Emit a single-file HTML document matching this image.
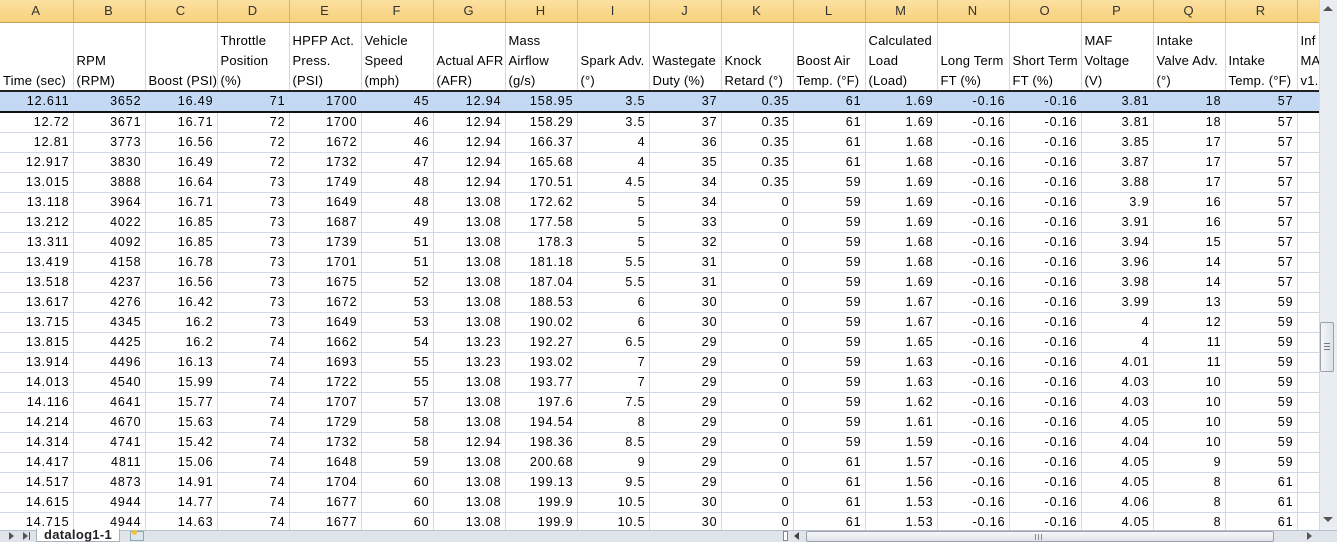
<!DOCTYPE html>
<html><head><meta charset="utf-8"><style>
*{margin:0;padding:0;box-sizing:border-box}
body{width:1337px;height:542px;overflow:hidden;background:#fff;font-family:"Liberation Sans",sans-serif;font-size:12px;color:#000;position:relative}
#grid{position:absolute;left:0;top:0;width:1319px;height:530px;overflow:hidden}
table{border-collapse:collapse;table-layout:fixed;width:1319px}
td{border-right:1px solid #d0d7e5;border-bottom:1px solid #d0d7e5;height:20px;padding:0 3px 0 2px;text-align:right;white-space:nowrap;overflow:hidden;line-height:19px;letter-spacing:0.9px;font-size:12.5px}
tr.L td{background:linear-gradient(#fbe0a0,#f7d27c);border-right:1px solid #d7b365;border-bottom:1px solid #c4a055;height:22px;text-align:center;color:#333;font-size:13px;line-height:21px;letter-spacing:0}
tr.H td{height:69px;text-align:left;vertical-align:bottom;line-height:20px;padding:0 0 0 3px;letter-spacing:0.2px;font-size:13px;border-bottom:2px solid #222}
tr.H td span{position:relative;top:1px;display:block}
tr.S td{background:#c3d9f3;border-bottom:2px solid #111}
#vs{position:absolute;left:1319px;top:0;width:18px;height:530px;background:#e9ecf0;border-left:1px solid #d5d9de}
#thumb{position:absolute;left:1320px;top:322px;width:14px;height:50px;background:linear-gradient(90deg,#f4f6f8,#dde2e8);border:1px solid #9aa3ad;border-radius:2px}
#bot{position:absolute;left:0;top:530px;width:1337px;height:12px;background:#dfe4ea;border-top:1px solid #b9c2cc}
#tab{position:absolute;left:36px;top:529px;width:84px;height:13px;background:#fff;border:1px solid #a8b2bd;border-top:none;font-size:13px;line-height:12px;text-align:center;color:#222;font-weight:bold;letter-spacing:0.3px}
#hs{position:absolute;left:806px;top:531px;width:468px;height:11px;background:linear-gradient(#f5f7f9,#dfe4ea);border:1px solid #9aa3ad;border-radius:2px}
</style></head><body>
<div id="grid"><table>
<colgroup><col style="width:73px"><col style="width:72px"><col style="width:72px"><col style="width:72px"><col style="width:72px"><col style="width:72px"><col style="width:72px"><col style="width:72px"><col style="width:72px"><col style="width:72px"><col style="width:72px"><col style="width:72px"><col style="width:72px"><col style="width:72px"><col style="width:72px"><col style="width:72px"><col style="width:72px"><col style="width:72px"><col style="width:22px"></colgroup>
<tr class="L"><td>A</td><td>B</td><td>C</td><td>D</td><td>E</td><td>F</td><td>G</td><td>H</td><td>I</td><td>J</td><td>K</td><td>L</td><td>M</td><td>N</td><td>O</td><td>P</td><td>Q</td><td>R</td><td></td></tr>
<tr class="H"><td><span>Time (sec)</span></td><td><span>RPM<br>(RPM)</span></td><td><span>Boost (PSI)</span></td><td><span>Throttle<br>Position<br>(%)</span></td><td><span>HPFP Act.<br>Press.<br>(PSI)</span></td><td><span>Vehicle<br>Speed<br>(mph)</span></td><td><span>Actual AFR<br>(AFR)</span></td><td><span>Mass<br>Airflow<br>(g/s)</span></td><td><span>Spark Adv.<br>(°)</span></td><td><span>Wastegate<br>Duty (%)</span></td><td><span>Knock<br>Retard (°)</span></td><td><span>Boost Air<br>Temp. (°F)</span></td><td><span>Calculated<br>Load<br>(Load)</span></td><td><span>Long Term<br>FT (%)</span></td><td><span>Short Term<br>FT (%)</span></td><td><span>MAF<br>Voltage<br>(V)</span></td><td><span>Intake<br>Valve Adv.<br>(°)</span></td><td><span>Intake<br>Temp. (°F)</span></td><td><span>Inf<br>MA<br>v1.</span></td></tr>
<tr class="S"><td>12.611</td><td>3652</td><td>16.49</td><td>71</td><td>1700</td><td>45</td><td>12.94</td><td>158.95</td><td>3.5</td><td>37</td><td>0.35</td><td>61</td><td>1.69</td><td>-0.16</td><td>-0.16</td><td>3.81</td><td>18</td><td>57</td><td></td></tr>
<tr><td>12.72</td><td>3671</td><td>16.71</td><td>72</td><td>1700</td><td>46</td><td>12.94</td><td>158.29</td><td>3.5</td><td>37</td><td>0.35</td><td>61</td><td>1.69</td><td>-0.16</td><td>-0.16</td><td>3.81</td><td>18</td><td>57</td><td></td></tr>
<tr><td>12.81</td><td>3773</td><td>16.56</td><td>72</td><td>1672</td><td>46</td><td>12.94</td><td>166.37</td><td>4</td><td>36</td><td>0.35</td><td>61</td><td>1.68</td><td>-0.16</td><td>-0.16</td><td>3.85</td><td>17</td><td>57</td><td></td></tr>
<tr><td>12.917</td><td>3830</td><td>16.49</td><td>72</td><td>1732</td><td>47</td><td>12.94</td><td>165.68</td><td>4</td><td>35</td><td>0.35</td><td>61</td><td>1.68</td><td>-0.16</td><td>-0.16</td><td>3.87</td><td>17</td><td>57</td><td></td></tr>
<tr><td>13.015</td><td>3888</td><td>16.64</td><td>73</td><td>1749</td><td>48</td><td>12.94</td><td>170.51</td><td>4.5</td><td>34</td><td>0.35</td><td>59</td><td>1.69</td><td>-0.16</td><td>-0.16</td><td>3.88</td><td>17</td><td>57</td><td></td></tr>
<tr><td>13.118</td><td>3964</td><td>16.71</td><td>73</td><td>1649</td><td>48</td><td>13.08</td><td>172.62</td><td>5</td><td>34</td><td>0</td><td>59</td><td>1.69</td><td>-0.16</td><td>-0.16</td><td>3.9</td><td>16</td><td>57</td><td></td></tr>
<tr><td>13.212</td><td>4022</td><td>16.85</td><td>73</td><td>1687</td><td>49</td><td>13.08</td><td>177.58</td><td>5</td><td>33</td><td>0</td><td>59</td><td>1.69</td><td>-0.16</td><td>-0.16</td><td>3.91</td><td>16</td><td>57</td><td></td></tr>
<tr><td>13.311</td><td>4092</td><td>16.85</td><td>73</td><td>1739</td><td>51</td><td>13.08</td><td>178.3</td><td>5</td><td>32</td><td>0</td><td>59</td><td>1.68</td><td>-0.16</td><td>-0.16</td><td>3.94</td><td>15</td><td>57</td><td></td></tr>
<tr><td>13.419</td><td>4158</td><td>16.78</td><td>73</td><td>1701</td><td>51</td><td>13.08</td><td>181.18</td><td>5.5</td><td>31</td><td>0</td><td>59</td><td>1.68</td><td>-0.16</td><td>-0.16</td><td>3.96</td><td>14</td><td>57</td><td></td></tr>
<tr><td>13.518</td><td>4237</td><td>16.56</td><td>73</td><td>1675</td><td>52</td><td>13.08</td><td>187.04</td><td>5.5</td><td>31</td><td>0</td><td>59</td><td>1.69</td><td>-0.16</td><td>-0.16</td><td>3.98</td><td>14</td><td>57</td><td></td></tr>
<tr><td>13.617</td><td>4276</td><td>16.42</td><td>73</td><td>1672</td><td>53</td><td>13.08</td><td>188.53</td><td>6</td><td>30</td><td>0</td><td>59</td><td>1.67</td><td>-0.16</td><td>-0.16</td><td>3.99</td><td>13</td><td>59</td><td></td></tr>
<tr><td>13.715</td><td>4345</td><td>16.2</td><td>73</td><td>1649</td><td>53</td><td>13.08</td><td>190.02</td><td>6</td><td>30</td><td>0</td><td>59</td><td>1.67</td><td>-0.16</td><td>-0.16</td><td>4</td><td>12</td><td>59</td><td></td></tr>
<tr><td>13.815</td><td>4425</td><td>16.2</td><td>74</td><td>1662</td><td>54</td><td>13.23</td><td>192.27</td><td>6.5</td><td>29</td><td>0</td><td>59</td><td>1.65</td><td>-0.16</td><td>-0.16</td><td>4</td><td>11</td><td>59</td><td></td></tr>
<tr><td>13.914</td><td>4496</td><td>16.13</td><td>74</td><td>1693</td><td>55</td><td>13.23</td><td>193.02</td><td>7</td><td>29</td><td>0</td><td>59</td><td>1.63</td><td>-0.16</td><td>-0.16</td><td>4.01</td><td>11</td><td>59</td><td></td></tr>
<tr><td>14.013</td><td>4540</td><td>15.99</td><td>74</td><td>1722</td><td>55</td><td>13.08</td><td>193.77</td><td>7</td><td>29</td><td>0</td><td>59</td><td>1.63</td><td>-0.16</td><td>-0.16</td><td>4.03</td><td>10</td><td>59</td><td></td></tr>
<tr><td>14.116</td><td>4641</td><td>15.77</td><td>74</td><td>1707</td><td>57</td><td>13.08</td><td>197.6</td><td>7.5</td><td>29</td><td>0</td><td>59</td><td>1.62</td><td>-0.16</td><td>-0.16</td><td>4.03</td><td>10</td><td>59</td><td></td></tr>
<tr><td>14.214</td><td>4670</td><td>15.63</td><td>74</td><td>1729</td><td>58</td><td>13.08</td><td>194.54</td><td>8</td><td>29</td><td>0</td><td>59</td><td>1.61</td><td>-0.16</td><td>-0.16</td><td>4.05</td><td>10</td><td>59</td><td></td></tr>
<tr><td>14.314</td><td>4741</td><td>15.42</td><td>74</td><td>1732</td><td>58</td><td>12.94</td><td>198.36</td><td>8.5</td><td>29</td><td>0</td><td>59</td><td>1.59</td><td>-0.16</td><td>-0.16</td><td>4.04</td><td>10</td><td>59</td><td></td></tr>
<tr><td>14.417</td><td>4811</td><td>15.06</td><td>74</td><td>1648</td><td>59</td><td>13.08</td><td>200.68</td><td>9</td><td>29</td><td>0</td><td>61</td><td>1.57</td><td>-0.16</td><td>-0.16</td><td>4.05</td><td>9</td><td>59</td><td></td></tr>
<tr><td>14.517</td><td>4873</td><td>14.91</td><td>74</td><td>1704</td><td>60</td><td>13.08</td><td>199.13</td><td>9.5</td><td>29</td><td>0</td><td>61</td><td>1.56</td><td>-0.16</td><td>-0.16</td><td>4.05</td><td>8</td><td>61</td><td></td></tr>
<tr><td>14.615</td><td>4944</td><td>14.77</td><td>74</td><td>1677</td><td>60</td><td>13.08</td><td>199.9</td><td>10.5</td><td>30</td><td>0</td><td>61</td><td>1.53</td><td>-0.16</td><td>-0.16</td><td>4.06</td><td>8</td><td>61</td><td></td></tr>
<tr><td>14.715</td><td>4944</td><td>14.63</td><td>74</td><td>1677</td><td>60</td><td>13.08</td><td>199.9</td><td>10.5</td><td>30</td><td>0</td><td>61</td><td>1.53</td><td>-0.16</td><td>-0.16</td><td>4.05</td><td>8</td><td>61</td><td></td></tr>
</table></div>
<div id="vs"></div>
<div style="position:absolute;left:1323px;top:6px;width:0;height:0;border-left:5px solid transparent;border-right:5px solid transparent;border-bottom:5px solid #555"></div>
<div style="position:absolute;left:1323px;top:517px;width:0;height:0;border-left:5px solid transparent;border-right:5px solid transparent;border-top:5px solid #555"></div>
<div id="thumb"><div style="position:absolute;left:3px;top:20px;width:6px;height:7px;border-top:1px solid #777;border-bottom:1px solid #777"></div><div style="position:absolute;left:3px;top:23px;width:6px;border-top:1px solid #777"></div></div>
<div id="bot"></div>
<div style="position:absolute;left:9px;top:532px;width:0;height:0;border-top:4px solid transparent;border-bottom:4px solid transparent;border-left:5px solid #555"></div>
<div style="position:absolute;left:23px;top:532px;width:0;height:0;border-top:4px solid transparent;border-bottom:4px solid transparent;border-left:5px solid #555"></div>
<div style="position:absolute;left:29px;top:532px;width:1px;height:8px;background:#555"></div>
<div id="tab">datalog1-1</div>
<div style="position:absolute;left:130px;top:531px;width:14px;height:10px;border:1px solid #8aa;background:#dde6ee"></div>
<div style="position:absolute;left:132px;top:530px;width:5px;height:5px;background:#f2c23a;border-radius:50%"></div>
<div style="position:absolute;left:783px;top:531px;width:5px;height:10px;border:1px solid #888;background:#fff"></div>
<div style="position:absolute;left:794px;top:532px;width:0;height:0;border-top:4px solid transparent;border-bottom:4px solid transparent;border-right:5px solid #444"></div>
<div id="hs"><div style="position:absolute;left:228px;top:2px;width:7px;height:6px;border-left:1px solid #888;border-right:1px solid #888"></div><div style="position:absolute;left:231px;top:2px;width:1px;height:6px;background:#888"></div></div>
<div style="position:absolute;left:1307px;top:532px;width:0;height:0;border-top:4px solid transparent;border-bottom:4px solid transparent;border-left:5px solid #555"></div>
</body></html>
